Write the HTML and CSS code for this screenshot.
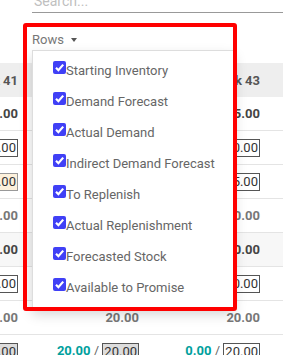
FILE: index.html
```html
<!DOCTYPE html>
<html lang="en">

<head>
    <meta charset="UTF-8">
    <title>Replenishment Report</title>
    <link rel="stylesheet" href="styles.css">
</head>

<body>
    <!-- Search bar -->
    <div class="search">Search...</div>

    <!-- Toolbar with Rows dropdown -->
    <div class="toolbar">
        <div class="dropdown">
            <span class="dropdown-toggle">Rows <span class="caret"></span></span>
            <div class="dropdown-menu">
                <div class="item"><span class="check"><svg viewBox="0 0 13 13" width="13" height="13"><path d="M3 6.8 L5.4 9.2 L10.2 3.6" fill="none" stroke="#fff" stroke-width="2.2"/></svg></span>Starting Inventory</div>
                <div class="item"><span class="check"><svg viewBox="0 0 13 13" width="13" height="13"><path d="M3 6.8 L5.4 9.2 L10.2 3.6" fill="none" stroke="#fff" stroke-width="2.2"/></svg></span>Demand Forecast</div>
                <div class="item"><span class="check"><svg viewBox="0 0 13 13" width="13" height="13"><path d="M3 6.8 L5.4 9.2 L10.2 3.6" fill="none" stroke="#fff" stroke-width="2.2"/></svg></span>Actual Demand</div>
                <div class="item"><span class="check"><svg viewBox="0 0 13 13" width="13" height="13"><path d="M3 6.8 L5.4 9.2 L10.2 3.6" fill="none" stroke="#fff" stroke-width="2.2"/></svg></span>Indirect Demand Forecast</div>
                <div class="item"><span class="check"><svg viewBox="0 0 13 13" width="13" height="13"><path d="M3 6.8 L5.4 9.2 L10.2 3.6" fill="none" stroke="#fff" stroke-width="2.2"/></svg></span>To Replenish</div>
                <div class="item"><span class="check"><svg viewBox="0 0 13 13" width="13" height="13"><path d="M3 6.8 L5.4 9.2 L10.2 3.6" fill="none" stroke="#fff" stroke-width="2.2"/></svg></span>Actual Replenishment</div>
                <div class="item"><span class="check"><svg viewBox="0 0 13 13" width="13" height="13"><path d="M3 6.8 L5.4 9.2 L10.2 3.6" fill="none" stroke="#fff" stroke-width="2.2"/></svg></span>Forecasted Stock</div>
                <div class="item"><span class="check"><svg viewBox="0 0 13 13" width="13" height="13"><path d="M3 6.8 L5.4 9.2 L10.2 3.6" fill="none" stroke="#fff" stroke-width="2.2"/></svg></span>Available to Promise</div>
            </div>
        </div>
    </div>

    <!-- Forecast table -->
    <div class="grid">
        <div class="row head">
            <div class="cell">Week 41</div>
            <div class="cell">Week 42</div>
            <div class="cell">Week 43</div>
        </div>
        <div class="row strong">
            <div class="cell">0.00</div>
            <div class="cell">0.00</div>
            <div class="cell">5.00</div>
        </div>
        <div class="row">
            <div class="cell"><span class="box">0.00</span></div>
            <div class="cell"><span class="box">0.00</span></div>
            <div class="cell"><span class="box">0.00</span></div>
        </div>
        <div class="row">
            <div class="cell"><span class="box warn">0.00</span></div>
            <div class="cell"><span class="box">0.00</span></div>
            <div class="cell"><span class="box">5.00</span></div>
        </div>
        <div class="row muted">
            <div class="cell">0.00</div>
            <div class="cell">0.00</div>
            <div class="cell">0.00</div>
        </div>
        <div class="row strong shaded">
            <div class="cell">0.00</div>
            <div class="cell">0.00</div>
            <div class="cell">0.00</div>
        </div>
        <div class="row">
            <div class="cell"><span class="box">0.00</span></div>
            <div class="cell"><span class="box">0.00</span></div>
            <div class="cell"><span class="box">0.00</span></div>
        </div>
        <div class="row muted">
            <div class="cell">20.00</div>
            <div class="cell">20.00</div>
            <div class="cell">20.00</div>
        </div>
        <div class="row">
            <div class="cell"><span class="box filled">0.00</span></div>
            <div class="cell"><span class="ok">20.00</span> / <span class="box filled">20.00</span></div>
            <div class="cell"><span class="ok">0.00</span> / <span class="box">20.00</span></div>
        </div>
    </div>

    <!-- Highlight frame -->
    <div class="highlight"></div>
</body>

</html>
```

FILE: styles.css
```css
/* Page */
body {
    font-family: Roboto, "Liberation Sans", sans-serif;
    font-size: 13px;
    color: #666;
    background-color: white;
    margin: 0;
    width: 283px;
    height: 355px;
    overflow: hidden;
    position: relative;
}

/* Search bar */
.search {
    margin: -9px 0 0 32px;
    height: 21px;
    line-height: 21px;
    padding-left: 2px;
    color: #c0c0c0;
    font-size: 14px;
    border-bottom: 1px solid #999;
}

/* Toolbar */
.toolbar {
    height: 50px;
    padding: 19px 0 0 32px;
    box-sizing: border-box;
}

.dropdown {
    position: relative;
    display: inline-block;
    z-index: 2;
}

.dropdown-toggle {
    display: flex;
    align-items: center;
    line-height: 16px;
    color: #777;
}

.caret {
    width: 0;
    height: 0;
    margin-left: 7px;
    border-top: 4px solid #555;
    border-left: 3.5px solid transparent;
    border-right: 3.5px solid transparent;
}

.dropdown-menu {
    position: absolute;
    left: 0;
    top: 18px;
    width: 202px;
    height: 258px;
    box-sizing: border-box;
    padding-top: 4px;
    background-color: white;
    border: 1px solid #ddd;
    box-shadow: 0 6px 12px rgba(0, 0, 0, 0.175);
}

.dropdown-menu .item {
    display: flex;
    align-items: center;
    height: 31px;
    padding-left: 20px;
    white-space: nowrap;
    color: #666;
}

.check {
    width: 13px;
    height: 13px;
    margin-bottom: 6px;
    border-radius: 2px;
    background-color: #4040f6;
    display: flex;
}

/* Forecast table */
.grid {
    margin-left: -99px;
}

.row {
    display: flex;
    height: 34px;
    align-items: center;
    border-bottom: 1px solid #e4e4e4;
    box-sizing: border-box;
}

.row.head {
    background-color: #eeeeee;
    font-weight: bold;
    color: #555;
    border-bottom: none;
}

.row.strong {
    font-weight: bold;
    color: #444;
}

.row.shaded {
    background-color: #f7f7f7;
}

.row.muted {
    font-weight: bold;
    color: #777;
}

.cell {
    width: 121px;
    flex-shrink: 0;
    padding-right: 4px;
    box-sizing: border-box;
    text-align: right;
    white-space: nowrap;
}

.box {
    display: inline-block;
    min-width: 34px;
    height: 18px;
    line-height: 16px;
    padding: 0 1px;
    box-sizing: border-box;
    border: 1px solid #555;
    color: #333;
    text-align: right;
    vertical-align: middle;
}

.box.warn {
    background-color: #fdf1dc;
    border-color: #999;
}

.box.filled {
    background-color: #ddd;
}

.ok {
    color: #00a09d;
    font-weight: bold;
}

/* Annotation frame */
.highlight {
    position: absolute;
    left: 23px;
    top: 23px;
    width: 214px;
    height: 288px;
    box-sizing: border-box;
    border: 4px solid #ff0000;
    border-radius: 3px;
    z-index: 3;
}
```
